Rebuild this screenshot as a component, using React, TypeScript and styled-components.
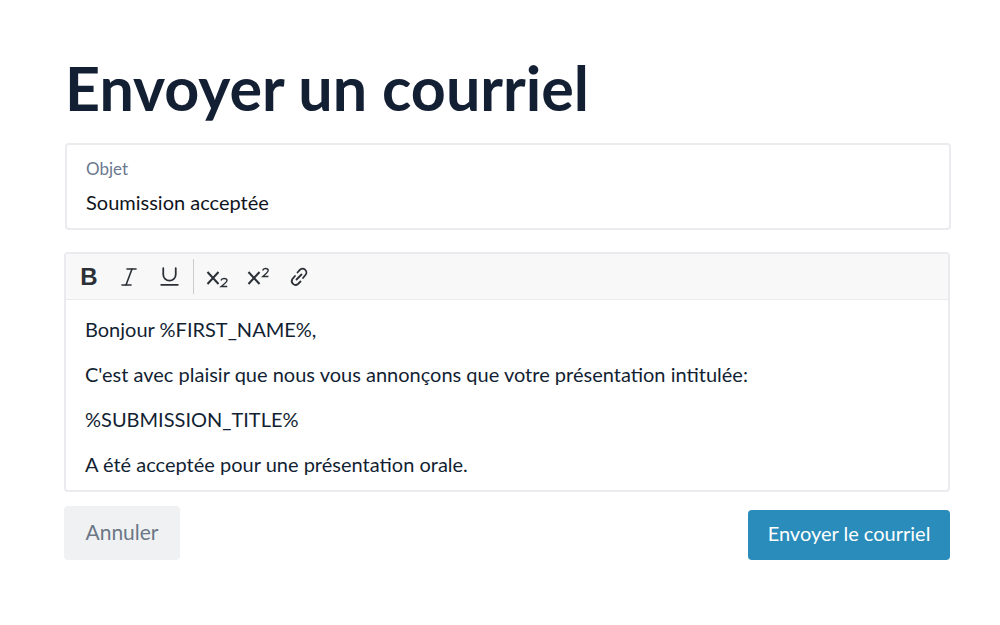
import styled, { createGlobalStyle } from "styled-components";
import { Italic, Underline } from "lucide-react";

const GlobalStyle = createGlobalStyle`
  html, body {
    margin: 0;
    padding: 0;
    background: #fff;
    font-family: "Lato", "Liberation Sans", sans-serif;
  }
`;

const bodyLines = [
  "Bonjour %FIRST_NAME%,",
  "C'est avec plaisir que nous vous annonçons que votre présentation intitulée:",
  "%SUBMISSION_TITLE%",
  "A été acceptée pour une présentation orale.",
];

const SubscriptIcon = () => (
  <svg width="24" height="22" viewBox="0 0 24 22" fill="none" stroke="#2b2f36" strokeWidth="2">
    <path d="M2.5 6 L13.5 18 M13.5 6 L2.5 18" />
    <path d="M16 14.5 q.5-2 3-2 q3 0 3 2 q0 1.5-5.8 6 h6" strokeWidth="1.4" />
  </svg>
);

const SuperscriptIcon = () => (
  <svg width="24" height="22" viewBox="0 0 24 22" fill="none" stroke="#2b2f36" strokeWidth="2">
    <path d="M2.5 6 L13.5 18 M13.5 6 L2.5 18" />
    <path d="M16.7 4.5 q.5-2 2.7-2 q2.8 0 2.8 2 q0 1.5-5.4 6 h5.6" strokeWidth="1.4" />
  </svg>
);

const LinkIcon = () => (
  <svg width="22" height="22" viewBox="0 0 22 22" fill="none" stroke="#2b2f36" strokeWidth="1.8" strokeLinecap="round">
    <path d="M9.5 6.5 L11.8 3.9 a3.8 3.8 0 0 1 5.8 4.9 L15 12" />
    <path d="M7 10 L4.4 13 a3.8 3.8 0 0 0 5.6 5 L12.5 15.5" />
    <path d="M8.5 13.5 L13.5 8.5" />
  </svg>
);

export default function App() {
  return (
    <>
      <GlobalStyle />
      <Page>
        <Title>Envoyer un courriel</Title>
        <SubjectCard>
          <SubjectLabel>Objet</SubjectLabel>
          <SubjectValue>Soumission acceptée</SubjectValue>
        </SubjectCard>
        <Editor>
          <Toolbar>
            <ToolGroup>
              <FormatTool><BoldGlyph>B</BoldGlyph></FormatTool>
              <FormatTool><Italic size={24} strokeWidth={1.6} color="#2b2f36" /></FormatTool>
              <FormatTool><Underline size={25} strokeWidth={1.7} color="#2b2f36" /></FormatTool>
            </ToolGroup>
            <ToolDivider />
            <ToolGroup>
              <ScriptTool><SubscriptIcon /></ScriptTool>
              <ScriptTool><SuperscriptIcon /></ScriptTool>
              <ScriptTool><LinkIcon /></ScriptTool>
            </ToolGroup>
          </Toolbar>
          <EditorBody>
            {bodyLines.map((line) => (
              <BodyLine key={line}>{line}</BodyLine>
            ))}
          </EditorBody>
        </Editor>
        <Actions>
          <CancelButton>Annuler</CancelButton>
          <SendButton>Envoyer le courriel</SendButton>
        </Actions>
      </Page>
    </>
  );
}

const Page = styled.div`
  box-sizing: border-box;
  width: 1000px;
  height: 625px;
  padding: 52px 50px 0 64px;
  overflow: hidden;
`;

const Title = styled.h1`
  margin: 0 0 19px 1px;
  font-size: 61px;
  line-height: 72px;
  font-weight: 700;
  color: #131f33;
`;

const SubjectCard = styled.div`
  box-sizing: border-box;
  height: 87px;
  margin: 0 -1px 0 1px;
  padding: 14px 19px 0;
  border: 2px solid #e9ebee;
  border-radius: 4px;
`;

const SubjectLabel = styled.div`
  font-size: 17px;
  line-height: 20px;
  color: #6b7890;
`;

const SubjectValue = styled.div`
  margin-top: 10px;
  font-size: 20px;
  line-height: 26px;
  color: #10141c;
`;

const Editor = styled.div`
  box-sizing: border-box;
  height: 240px;
  margin-top: 22px;
  border: 2px solid #e9ebee;
  border-radius: 4px;
`;

const Toolbar = styled.div`
  display: flex;
  align-items: center;
  height: 45px;
  background: #f8f8f8;
  border-bottom: 1px solid #e9ebee;
  padding-left: 3px;
`;

const ToolGroup = styled.div`
  display: flex;
  align-items: center;
`;

const ToolDivider = styled.div`
  width: 1px;
  height: 35px;
  background: #c9cccf;
  margin: 0 2px 0 4px;
`;

const FormatTool = styled.span`
  display: flex;
  align-items: center;
  justify-content: center;
  width: 40px;
  height: 30px;
`;

const ScriptTool = styled(FormatTool)`
  width: 41px;
`;

const BoldGlyph = styled.span`
  font-family: "Liberation Sans", sans-serif;
  font-size: 24px;
  font-weight: 700;
  color: #2b2f36;
`;

const EditorBody = styled.div`
  padding: 16px 19px 0;
  display: flex;
  flex-direction: column;
  gap: 19px;
`;

const BodyLine = styled.div`
  font-size: 20px;
  line-height: 26px;
  color: #131f33;
`;

const Actions = styled.div`
  display: flex;
  justify-content: space-between;
  align-items: flex-end;
  margin-top: 14px;
`;

const CancelButton = styled.button`
  width: 116px;
  height: 54px;
  padding: 0 0 4px;
  border: none;
  border-radius: 4px;
  background: #eff1f3;
  color: #6c7786;
  font-family: inherit;
  font-size: 21px;
`;

const SendButton = styled.button`
  width: 202px;
  height: 50px;
  padding: 0 0 4px;
  border: none;
  border-radius: 4px;
  background: #2a8cba;
  color: #fff;
  font-family: inherit;
  font-size: 20px;
`;
